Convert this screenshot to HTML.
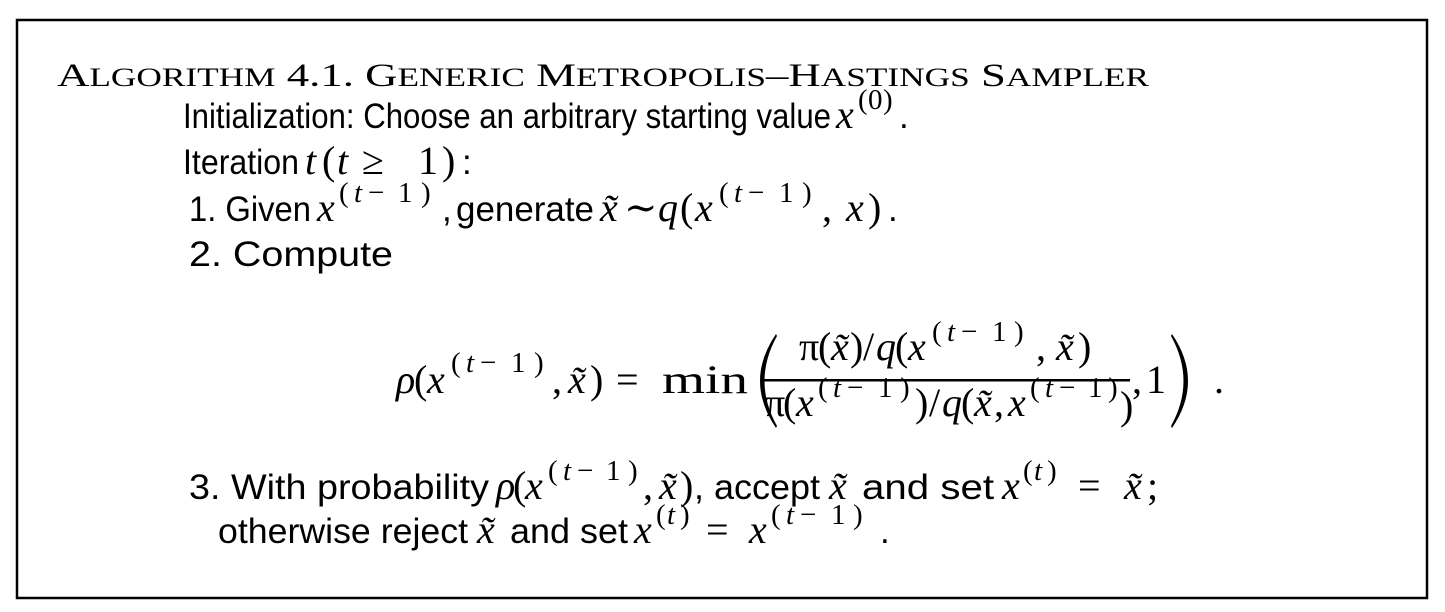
<!DOCTYPE html>
<html><head><meta charset="utf-8"><style>
html,body{margin:0;padding:0;background:#fff;}
svg{display:block}
text{fill:#000}
.s{font-family:"Liberation Sans","DejaVu Sans",sans-serif;font-size:35px;}
.m{font-family:"Liberation Serif","DejaVu Serif",serif;font-size:40px;font-style:italic;}
.r{font-family:"Liberation Serif","DejaVu Serif",serif;font-size:40px;}
.p{font-family:"Liberation Serif","DejaVu Serif",serif;font-size:29px;}
.pi{font-family:"Liberation Serif","DejaVu Serif",serif;font-size:29px;font-style:italic;}
.t{font-family:"Liberation Serif","DejaVu Serif",serif;font-size:33px;}
</style></head><body>
<svg width="1445" height="612" viewBox="0 0 1445 612" xmlns="http://www.w3.org/2000/svg">
<rect x="17" y="20" width="1410" height="578" fill="none" stroke="#000" stroke-width="2.5"/>
<text x="57" y="86" class="t" textLength="1092" lengthAdjust="spacingAndGlyphs">A<tspan font-size="26">LGORITHM</tspan> 4.1. G<tspan font-size="26">ENERIC</tspan> M<tspan font-size="26">ETROPOLIS</tspan>–H<tspan font-size="26">ASTINGS</tspan> S<tspan font-size="26">AMPLER</tspan></text>

<text x="183" y="128" class="s" textLength="648" lengthAdjust="spacingAndGlyphs">Initialization: Choose an arbitrary starting value</text>
<text x="836" y="128" class="m">x</text>
<text y="109" class="p"><tspan x="858">(</tspan><tspan x="868">0</tspan><tspan x="883">)</tspan></text>
<text x="899" y="128" class="s">.</text>

<text x="183" y="174" class="s" textLength="116" lengthAdjust="spacingAndGlyphs">Iteration</text>
<text y="174" class="r"><tspan x="305" font-style="italic">t</tspan><tspan x="322">(</tspan><tspan x="337" font-style="italic">t</tspan><tspan x="362">≥</tspan><tspan x="418">1</tspan><tspan x="442">)</tspan></text>
<text x="462" y="174" class="s">:</text>

<text x="189" y="221" class="s" textLength="122" lengthAdjust="spacingAndGlyphs">1. Given</text>
<text x="317" y="221" class="m">x</text>
<text y="202" class="p"><tspan x="339">(</tspan><tspan x="354" class="pi">t</tspan><tspan x="368">−</tspan><tspan x="398">1</tspan><tspan x="421">)</tspan></text>
<text x="442" y="221" class="s">,</text>
<text x="456" y="221" class="s" textLength="138" lengthAdjust="spacingAndGlyphs">generate</text>
<text x="600" y="221" class="m">x̃</text>
<text x="624" y="221" class="r">∼</text>
<text y="221" class="r"><tspan x="658" font-style="italic">q</tspan><tspan x="680">(</tspan><tspan x="695" font-style="italic">x</tspan></text>
<text y="202" class="p"><tspan x="719">(</tspan><tspan x="734" class="pi">t</tspan><tspan x="748">−</tspan><tspan x="779">1</tspan><tspan x="802">)</tspan></text>
<text y="221" class="r"><tspan x="822">,</tspan><tspan x="846" font-style="italic">x</tspan><tspan x="868">)</tspan></text>
<text x="888" y="221" class="s">.</text>

<text x="189" y="266" class="s" textLength="204" lengthAdjust="spacingAndGlyphs">2. Compute</text>

<text y="393" class="r"><tspan x="396" font-style="italic">ρ</tspan><tspan x="414">(</tspan><tspan x="427" font-style="italic">x</tspan></text>
<text y="372" class="p"><tspan x="451">(</tspan><tspan x="466" class="pi">t</tspan><tspan x="480">−</tspan><tspan x="511">1</tspan><tspan x="534">)</tspan></text>
<text y="393" class="r"><tspan x="552">,</tspan><tspan x="568" font-style="italic">x̃</tspan><tspan x="590">)</tspan><tspan x="616">=</tspan></text>
<text x="662" y="393" class="r" textLength="86" lengthAdjust="spacingAndGlyphs">min</text>
<path d="M776,334 Q744,381 776,428 L777,426 Q752,381 777,336 Z" fill="#000"/>
<text y="360" class="r"><tspan x="799">π</tspan><tspan x="818">(</tspan><tspan x="831" font-style="italic">x̃</tspan><tspan x="850">)</tspan><tspan x="863">/</tspan><tspan x="876" font-style="italic">q</tspan><tspan x="895">(</tspan><tspan x="908" font-style="italic">x</tspan></text>
<text y="341" class="p"><tspan x="932">(</tspan><tspan x="947" class="pi">t</tspan><tspan x="961">−</tspan><tspan x="992">1</tspan><tspan x="1014">)</tspan></text>
<text y="360" class="r"><tspan x="1036">,</tspan><tspan x="1056" font-style="italic">x̃</tspan><tspan x="1078">)</tspan></text>
<rect x="762" y="379" width="368" height="2.5" fill="#000"/>
<text y="416" class="r"><tspan x="765">π</tspan><tspan x="783">(</tspan><tspan x="796" font-style="italic">x</tspan></text>
<text y="397" class="p"><tspan x="818">(</tspan><tspan x="833" class="pi">t</tspan><tspan x="847">−</tspan><tspan x="878">1</tspan><tspan x="900">)</tspan></text>
<text y="416" class="r"><tspan x="915">)</tspan><tspan x="929">/</tspan><tspan x="942" font-style="italic">q</tspan><tspan x="961">(</tspan><tspan x="974" font-style="italic">x̃</tspan><tspan x="994">,</tspan><tspan x="1008" font-style="italic">x</tspan></text>
<text y="397" class="p"><tspan x="1030">(</tspan><tspan x="1045" class="pi">t</tspan><tspan x="1059">−</tspan><tspan x="1088">1</tspan><tspan x="1108">)</tspan></text>
<text x="1120" y="419" class="r">)</text>
<text y="393" class="r"><tspan x="1132">,</tspan><tspan x="1146">1</tspan></text>
<path d="M1172,334 Q1204,381 1172,428 L1171,426 Q1196,381 1171,336 Z" fill="#000"/>
<text x="1214" y="393" class="r">.</text>

<text x="189" y="499" class="s" textLength="300" lengthAdjust="spacingAndGlyphs">3. With probability</text>
<text y="499" class="r"><tspan x="496" font-style="italic">ρ</tspan><tspan x="513">(</tspan><tspan x="525" font-style="italic">x</tspan></text>
<text y="480" class="p"><tspan x="548">(</tspan><tspan x="563" class="pi">t</tspan><tspan x="577">−</tspan><tspan x="606">1</tspan><tspan x="628">)</tspan></text>
<text y="499" class="r"><tspan x="643">,</tspan><tspan x="659" font-style="italic">x̃</tspan><tspan x="680">)</tspan></text>
<text x="694" y="499" class="s" textLength="126" lengthAdjust="spacingAndGlyphs">, accept</text>
<text x="829" y="499" class="m">x̃</text>
<text x="862" y="499" class="s" textLength="132" lengthAdjust="spacingAndGlyphs">and set</text>
<text x="1002" y="499" class="m">x</text>
<text y="480" class="p"><tspan x="1023">(</tspan><tspan x="1034" class="pi">t</tspan><tspan x="1047">)</tspan></text>
<text x="1078" y="499" class="r">=</text>
<text x="1124" y="499" class="m">x̃</text>
<text x="1147" y="499" class="r">;</text>

<text x="218" y="543" class="s" textLength="250" lengthAdjust="spacingAndGlyphs">otherwise reject</text>
<text x="477" y="543" class="m">x̃</text>
<text x="510" y="543" class="s" textLength="118" lengthAdjust="spacingAndGlyphs">and set</text>
<text x="634" y="543" class="m">x</text>
<text y="524" class="p"><tspan x="656">(</tspan><tspan x="667" class="pi">t</tspan><tspan x="680">)</tspan></text>
<text x="706" y="543" class="r">=</text>
<text x="749" y="543" class="m">x</text>
<text y="524" class="p"><tspan x="771">(</tspan><tspan x="786" class="pi">t</tspan><tspan x="800">−</tspan><tspan x="831">1</tspan><tspan x="853">)</tspan></text>
<text x="880" y="543" class="s">.</text>
</svg>
</body></html>
